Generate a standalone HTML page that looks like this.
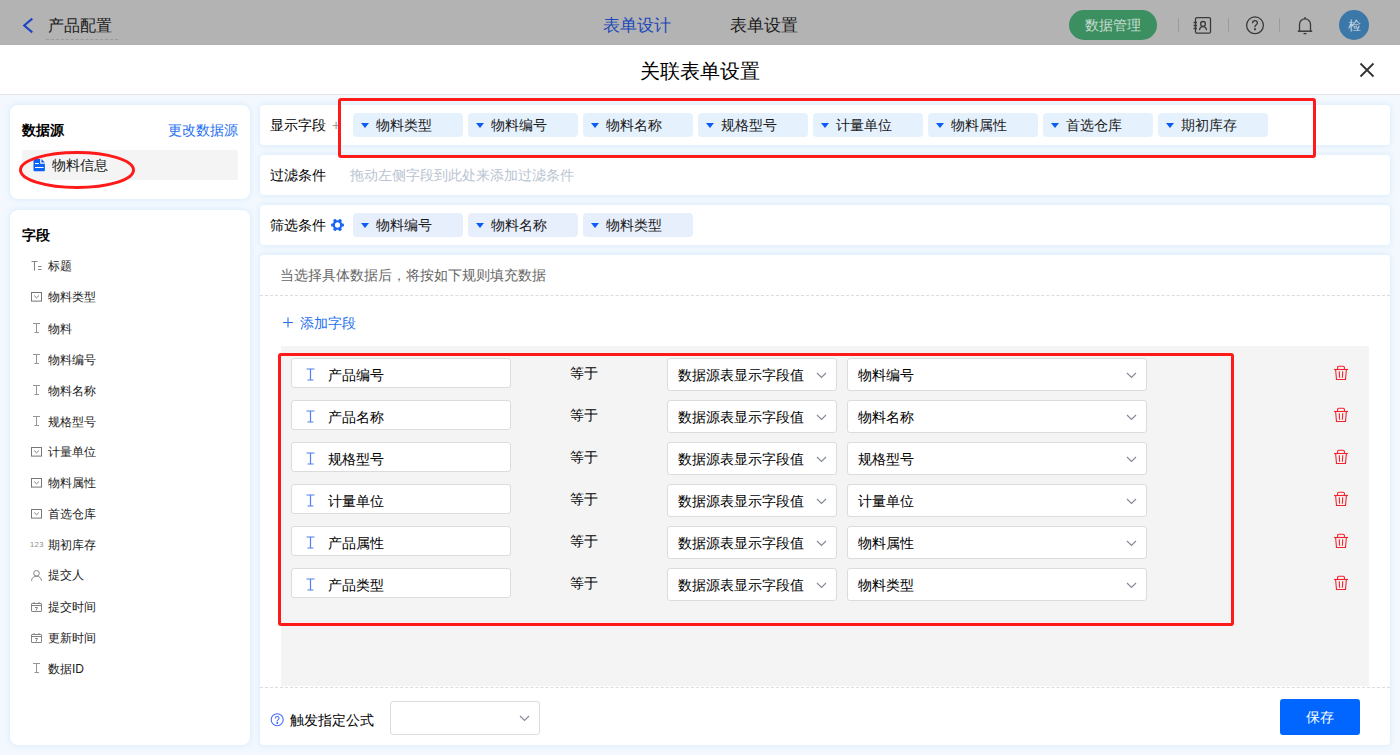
<!DOCTYPE html>
<html><head><meta charset="utf-8">
<style>
*{box-sizing:border-box;margin:0;padding:0}
html,body{width:1400px;height:755px;overflow:hidden}
body{font-family:"Liberation Sans",sans-serif;background:#f2f8fe;position:relative;color:#1f1f1f}
.abs{position:absolute}
#hdr{left:0;top:0;width:1400px;height:45px;background:#b3b3b3}
#mhead{left:0;top:45px;width:1400px;height:50px;background:#fff;border-bottom:1px solid #e6e6e6}
.card{position:absolute;background:#fff;border-radius:8px;box-shadow:0 0 6px rgba(24,120,240,0.13)}
.t{position:absolute;white-space:nowrap;line-height:1}
.chip{position:absolute;height:24px;width:110px;background:#e5f2fe;border-radius:4px;font-size:14px;color:#1a1a1a}
.chip .tri{position:absolute;left:8px;top:10px;width:0;height:0;border-left:4.5px solid transparent;border-right:4.5px solid transparent;border-top:5.5px solid #0b5cf6}
.chip span{position:absolute;left:23px;top:5px;line-height:14px}
.fitem{position:absolute;left:22px;font-size:12px;color:#1a1a1a;height:14px}
.fitem .ic{position:absolute;left:8px;top:0;width:12px;height:14px}
.fitem span{position:absolute;left:26px;top:0;line-height:14px}
.inp{position:absolute;background:#fff;border:1px solid #dcdcdc;border-radius:3px;height:31px;font-size:14px}
.redbox{position:absolute;border:3px solid #ff1a1a;border-radius:3px}
</style></head><body>
<div id="hdr" class="abs">
  <svg class="abs" style="left:20px;top:15px" width="16" height="21" viewBox="0 0 16 21"><path d="M12.3 3.6 L4.2 10.5 L12.3 17.4" fill="none" stroke="#1d45c4" stroke-width="2.1"/></svg>
  <div class="t" style="left:48px;top:18px;font-size:16px;color:#1c1c1c">产品配置</div>
  <div class="abs" style="left:46px;top:39px;width:72px;border-top:1px dashed #9a9a9a"></div>
  <div class="t" style="left:603px;top:18px;font-size:16.6px;color:#1d49b8">表单设计</div>
  <div class="t" style="left:730px;top:18px;font-size:16.6px;color:#1c1c1c">表单设置</div>
  <div class="abs" style="left:1069px;top:10px;width:88px;height:30px;border-radius:15px;background:#3b8f60"></div>
  <div class="t" style="left:1085px;top:18px;font-size:14px;color:#c8dccf">数据管理</div>
  <div class="abs" style="left:1178px;top:18px;width:1px;height:14px;background:#9c9c9c"></div>
  <div class="abs" style="left:1228px;top:18px;width:1px;height:14px;background:#9c9c9c"></div>
  <div class="abs" style="left:1279px;top:18px;width:1px;height:14px;background:#9c9c9c"></div>
  <svg class="abs" style="left:1190px;top:14px" width="24" height="24" viewBox="0 0 24 24" fill="none" stroke="#3a3a3a" stroke-width="1.3">
    <rect x="5.5" y="3.6" width="15" height="15.6" rx="1.5"/>
    <path d="M3.6 8.5h3.4M3.6 11.5h3.4M3.6 14.5h3.4"/>
    <circle cx="13" cy="9.9" r="2.4"/>
    <path d="M9.4 16.2c0.4-2.3 1.8-3.5 3.6-3.5s3.2 1.2 3.6 3.5"/>
  </svg>
  <svg class="abs" style="left:1243px;top:13px" width="24" height="24" viewBox="0 0 24 24" fill="none" stroke="#3a3a3a" stroke-width="1.3">
    <circle cx="12" cy="12.3" r="8.4"/>
    <path d="M9.6 10.2c0-1.5 1-2.5 2.4-2.5s2.4 1 2.4 2.3c0 1.6-2.4 1.9-2.4 3.6v0.6"/>
    <circle cx="12" cy="16.3" r="0.5" fill="#3a3a3a"/>
  </svg>
  <svg class="abs" style="left:1293px;top:13px" width="24" height="24" viewBox="0 0 24 24" fill="none" stroke="#3a3a3a" stroke-width="1.3">
    <path d="M12 4v2"/>
    <path d="M6.5 18V11.5c0-3.2 2.4-5.6 5.5-5.6s5.5 2.4 5.5 5.6V18"/>
    <path d="M4.8 18.2h14.4" stroke-width="1.5"/>
    <path d="M10.5 20.6h3"/>
  </svg>
  <div class="abs" style="left:1339px;top:10px;width:30px;height:30px;border-radius:50%;background:#3b77a9"></div>
  <div class="t" style="left:1347.5px;top:19px;font-size:13px;color:#c8d5df">检</div>
</div>
<div id="mhead" class="abs">
  <div class="t" style="left:640px;top:16px;font-size:20px;color:#000">关联表单设置</div>
  <svg class="abs" style="left:1359px;top:17px" width="16" height="16" viewBox="0 0 16 16"><path d="M1.5 1.5 L14.5 14.5 M14.5 1.5 L1.5 14.5" stroke="#333" stroke-width="1.8"/></svg>
</div>

<!-- left cards -->
<div class="card" style="left:10px;top:105px;width:240px;height:94px"></div>
<div class="t" style="left:22px;top:123px;font-size:14px;font-weight:bold;color:#000">数据源</div>
<div class="t" style="left:168px;top:123px;font-size:14px;color:#1e6ff0">更改数据源</div>
<div class="abs" style="left:22px;top:150px;width:216px;height:30px;background:#f4f4f4;border-radius:2px"></div>
<svg class="abs" style="left:33px;top:159px" width="12" height="13" viewBox="0 0 12 13"><path d="M0.5 1a1 1 0 0 1 1-1h5.6v4.8h4.8v6.4a1 1 0 0 1-1 1h-9.4a1 1 0 0 1-1-1z" fill="#0d62f6"/><path d="M8.4 0l3.5 3.6h-3.5z" fill="#0d62f6"/><rect x="2" y="4" width="3.8" height="1" fill="#fff"/><rect x="2" y="8" width="8.6" height="1" fill="#fff"/></svg>
<div class="t" style="left:52px;top:158px;font-size:14px;color:#1a1a1a">物料信息</div>
<div class="card" style="left:10px;top:210px;width:240px;height:535px"></div>
<div class="t" style="left:22px;top:228px;font-size:14px;font-weight:bold;color:#000">字段</div>
<svg class="abs" style="left:31px;top:261px" width="11" height="10" viewBox="0 0 11 10" fill="none" stroke="#858585" stroke-width="1"><path d="M0.5 0.5h6M3.5 0.5v9M7 5.5h3.5M7 8.5h3.5"/></svg>
<div class="t" style="left:48px;top:260px;font-size:12px;color:#1a1a1a">标题</div>
<svg class="abs" style="left:30.5px;top:292px" width="12" height="10" viewBox="0 0 12 10" fill="none" stroke="#777" stroke-width="1"><rect x="0.5" y="0.5" width="10" height="8.6"/><path d="M3.2 3.6l2.3 2.2 2.3-2.2"/></svg>
<div class="t" style="left:48px;top:291px;font-size:12px;color:#1a1a1a">物料类型</div>
<svg class="abs" style="left:32px;top:323px" width="9" height="10" viewBox="0 0 9 10" fill="none" stroke="#959595" stroke-width="1"><path d="M1 0.5h7M4.5 0.5v9M2.5 9.5h4.5"/></svg>
<div class="t" style="left:48px;top:323px;font-size:12px;color:#1a1a1a">物料</div>
<svg class="abs" style="left:32px;top:354px" width="9" height="10" viewBox="0 0 9 10" fill="none" stroke="#959595" stroke-width="1"><path d="M1 0.5h7M4.5 0.5v9M2.5 9.5h4.5"/></svg>
<div class="t" style="left:48px;top:354px;font-size:12px;color:#1a1a1a">物料编号</div>
<svg class="abs" style="left:32px;top:385px" width="9" height="10" viewBox="0 0 9 10" fill="none" stroke="#959595" stroke-width="1"><path d="M1 0.5h7M4.5 0.5v9M2.5 9.5h4.5"/></svg>
<div class="t" style="left:48px;top:385px;font-size:12px;color:#1a1a1a">物料名称</div>
<svg class="abs" style="left:32px;top:416px" width="9" height="10" viewBox="0 0 9 10" fill="none" stroke="#959595" stroke-width="1"><path d="M1 0.5h7M4.5 0.5v9M2.5 9.5h4.5"/></svg>
<div class="t" style="left:48px;top:416px;font-size:12px;color:#1a1a1a">规格型号</div>
<svg class="abs" style="left:30.5px;top:447px" width="12" height="10" viewBox="0 0 12 10" fill="none" stroke="#777" stroke-width="1"><rect x="0.5" y="0.5" width="10" height="8.6"/><path d="M3.2 3.6l2.3 2.2 2.3-2.2"/></svg>
<div class="t" style="left:48px;top:446px;font-size:12px;color:#1a1a1a">计量单位</div>
<svg class="abs" style="left:30.5px;top:478px" width="12" height="10" viewBox="0 0 12 10" fill="none" stroke="#777" stroke-width="1"><rect x="0.5" y="0.5" width="10" height="8.6"/><path d="M3.2 3.6l2.3 2.2 2.3-2.2"/></svg>
<div class="t" style="left:48px;top:477px;font-size:12px;color:#1a1a1a">物料属性</div>
<svg class="abs" style="left:30.5px;top:509px" width="12" height="10" viewBox="0 0 12 10" fill="none" stroke="#777" stroke-width="1"><rect x="0.5" y="0.5" width="10" height="8.6"/><path d="M3.2 3.6l2.3 2.2 2.3-2.2"/></svg>
<div class="t" style="left:48px;top:508px;font-size:12px;color:#1a1a1a">首选仓库</div>
<div class="t" style="left:30px;top:540.5px;font-size:7.5px;color:#8a8a8a;letter-spacing:0.4px">123</div>
<div class="t" style="left:48px;top:539px;font-size:12px;color:#1a1a1a">期初库存</div>
<svg class="abs" style="left:31px;top:570px" width="11" height="11" viewBox="0 0 11 11" fill="none" stroke="#858585" stroke-width="1"><circle cx="5.5" cy="3.3" r="2.8"/><path d="M0.5 10.8c0.3-3 2.2-4.6 5-4.6s4.7 1.6 5 4.6"/></svg>
<div class="t" style="left:48px;top:569px;font-size:12px;color:#1a1a1a">提交人</div>
<svg class="abs" style="left:31px;top:602px" width="11" height="10" viewBox="0 0 11 10" fill="none" stroke="#858585" stroke-width="1"><rect x="0.5" y="1.5" width="10" height="8" rx="0.5"/><path d="M0.5 3.5h10M3 0v2M8 0v2M4 5.5h2.5l-1.5 3"/></svg>
<div class="t" style="left:48px;top:601px;font-size:12px;color:#1a1a1a">提交时间</div>
<svg class="abs" style="left:31px;top:633px" width="11" height="10" viewBox="0 0 11 10" fill="none" stroke="#858585" stroke-width="1"><rect x="0.5" y="1.5" width="10" height="8" rx="0.5"/><path d="M0.5 3.5h10M3 0v2M8 0v2M4 5.5h2.5l-1.5 3"/></svg>
<div class="t" style="left:48px;top:632px;font-size:12px;color:#1a1a1a">更新时间</div>
<svg class="abs" style="left:32px;top:663px" width="9" height="10" viewBox="0 0 9 10" fill="none" stroke="#959595" stroke-width="1"><path d="M1 0.5h7M4.5 0.5v9M2.5 9.5h4.5"/></svg>
<div class="t" style="left:48px;top:663px;font-size:12px;color:#1a1a1a">数据ID</div>
<svg class="abs" style="left:17px;top:148px" width="122" height="44" viewBox="0 0 122 44"><ellipse cx="60" cy="22" rx="56.5" ry="17.5" fill="none" stroke="#ff1a1a" stroke-width="3"/></svg>

<!-- right cards -->
<div class="card" style="left:260px;top:105px;width:1130px;height:40px;border-radius:4px"></div>
<div class="t" style="left:270px;top:118px;font-size:14px;color:#000">显示字段</div>
<div class="t" style="left:332px;top:118px;font-size:14px;color:#999">+</div>
<div class="chip" style="left:353px;top:113px"><i class="tri"></i><span>物料类型</span></div>
<div class="chip" style="left:468px;top:113px"><i class="tri"></i><span>物料编号</span></div>
<div class="chip" style="left:583px;top:113px"><i class="tri"></i><span>物料名称</span></div>
<div class="chip" style="left:698px;top:113px"><i class="tri"></i><span>规格型号</span></div>
<div class="chip" style="left:813px;top:113px"><i class="tri"></i><span>计量单位</span></div>
<div class="chip" style="left:928px;top:113px"><i class="tri"></i><span>物料属性</span></div>
<div class="chip" style="left:1043px;top:113px"><i class="tri"></i><span>首选仓库</span></div>
<div class="chip" style="left:1158px;top:113px"><i class="tri"></i><span>期初库存</span></div>
<div class="card" style="left:260px;top:155px;width:1130px;height:40px;border-radius:4px"></div>
<div class="t" style="left:270px;top:168px;font-size:14px;color:#000">过滤条件</div>
<div class="t" style="left:350px;top:168px;font-size:14px;color:#b9c3d1">拖动左侧字段到此处来添加过滤条件</div>
<div class="card" style="left:260px;top:205px;width:1130px;height:40px;border-radius:4px"></div>
<div class="t" style="left:270px;top:218px;font-size:14px;color:#000">筛选条件</div>
<svg class="abs" style="left:330px;top:218px" width="15" height="14" viewBox="0 0 15 14"><g fill="#1a66f5" transform="translate(7.5 7)"><path fill-rule="evenodd" d="M0 -4.8a4.8 4.8 0 1 1 -0.001 0z M0 -2.5a2.5 2.5 0 1 0 0.001 0z"/><rect x="3.6" y="-1.6" width="2.8" height="3.2" rx="0.9" transform="rotate(0)"/><rect x="3.6" y="-1.6" width="2.8" height="3.2" rx="0.9" transform="rotate(60)"/><rect x="3.6" y="-1.6" width="2.8" height="3.2" rx="0.9" transform="rotate(120)"/><rect x="3.6" y="-1.6" width="2.8" height="3.2" rx="0.9" transform="rotate(180)"/><rect x="3.6" y="-1.6" width="2.8" height="3.2" rx="0.9" transform="rotate(240)"/><rect x="3.6" y="-1.6" width="2.8" height="3.2" rx="0.9" transform="rotate(300)"/></g><circle cx="7.5" cy="7" r="2.5" fill="#fff"/></svg>
<div class="chip" style="left:353px;top:213px;background:#e8effc"><i class="tri"></i><span>物料编号</span></div>
<div class="chip" style="left:468px;top:213px;background:#e8effc"><i class="tri"></i><span>物料名称</span></div>
<div class="chip" style="left:583px;top:213px;background:#e8effc"><i class="tri"></i><span>物料类型</span></div>
<div class="redbox" style="left:338px;top:98px;width:978px;height:60px"></div>
<div class="card" style="left:260px;top:255px;width:1130px;height:490px;border-radius:4px"></div>
<div class="t" style="left:280px;top:268px;font-size:14px;color:#666">当选择具体数据后，将按如下规则填充数据</div>
<div class="abs" style="left:260px;top:295px;width:1130px;border-top:1px dashed #dcdcdc"></div>
<svg class="abs" style="left:283px;top:317px" width="10" height="11" viewBox="0 0 10 11"><path d="M5 0.5v10M0 5.5h10" stroke="#2a6ff0" stroke-width="1.1"/></svg>
<div class="t" style="left:300px;top:316px;font-size:14px;color:#1e6ff0">添加字段</div>
<div class="abs" style="left:281px;top:346px;width:1088px;height:340px;background:#f4f4f4"></div>
<div class="abs" style="left:260px;top:687px;width:1130px;border-top:1px dashed #dcdcdc"></div>
<div class="inp" style="left:291px;top:358px;width:220px;height:30px"></div>
<svg class="abs" style="left:306px;top:368px" width="9" height="13" viewBox="0 0 9 13"><path d="M0.5 1h8M4.5 1v11M1.5 12h6" fill="none" stroke="#4f7ff2" stroke-width="1.2"/></svg>
<div class="t" style="left:328px;top:368px;font-size:14px;color:#000">产品编号</div>
<div class="t" style="left:570px;top:366px;font-size:14px;color:#000">等于</div>
<div class="inp" style="left:667px;top:358px;width:170px;height:33px"></div>
<div class="t" style="left:678px;top:368px;font-size:14px;color:#000">数据源表显示字段值</div>
<svg class="abs" style="left:816px;top:372px" width="11" height="7" viewBox="0 0 11 7"><path d="M1 1l4.5 4.5L10 1" fill="none" stroke="#858b96" stroke-width="1.2"/></svg>
<div class="inp" style="left:847px;top:358px;width:300px;height:33px"></div>
<div class="t" style="left:858px;top:368px;font-size:14px;color:#000">物料编号</div>
<svg class="abs" style="left:1126px;top:372px" width="11" height="7" viewBox="0 0 11 7"><path d="M1 1l4.5 4.5L10 1" fill="none" stroke="#858b96" stroke-width="1.2"/></svg>
<svg class="abs" style="left:1333px;top:365px" width="16" height="16" viewBox="0 0 16 16" fill="none" stroke="#f5222d" stroke-width="1.1"><path d="M1 4.5h14"/><path d="M4.6 4.5V2.6a1.3 1.3 0 0 1 1.3-1.3h4.2a1.3 1.3 0 0 1 1.3 1.3v1.9"/><path d="M2.6 4.5l0.9 10h9l0.9-10"/><path d="M6.3 6.3l0.3 6.5M9.7 6.3l-0.3 6.5"/></svg>
<div class="inp" style="left:291px;top:400px;width:220px;height:30px"></div>
<svg class="abs" style="left:306px;top:410px" width="9" height="13" viewBox="0 0 9 13"><path d="M0.5 1h8M4.5 1v11M1.5 12h6" fill="none" stroke="#4f7ff2" stroke-width="1.2"/></svg>
<div class="t" style="left:328px;top:410px;font-size:14px;color:#000">产品名称</div>
<div class="t" style="left:570px;top:408px;font-size:14px;color:#000">等于</div>
<div class="inp" style="left:667px;top:400px;width:170px;height:33px"></div>
<div class="t" style="left:678px;top:410px;font-size:14px;color:#000">数据源表显示字段值</div>
<svg class="abs" style="left:816px;top:414px" width="11" height="7" viewBox="0 0 11 7"><path d="M1 1l4.5 4.5L10 1" fill="none" stroke="#858b96" stroke-width="1.2"/></svg>
<div class="inp" style="left:847px;top:400px;width:300px;height:33px"></div>
<div class="t" style="left:858px;top:410px;font-size:14px;color:#000">物料名称</div>
<svg class="abs" style="left:1126px;top:414px" width="11" height="7" viewBox="0 0 11 7"><path d="M1 1l4.5 4.5L10 1" fill="none" stroke="#858b96" stroke-width="1.2"/></svg>
<svg class="abs" style="left:1333px;top:407px" width="16" height="16" viewBox="0 0 16 16" fill="none" stroke="#f5222d" stroke-width="1.1"><path d="M1 4.5h14"/><path d="M4.6 4.5V2.6a1.3 1.3 0 0 1 1.3-1.3h4.2a1.3 1.3 0 0 1 1.3 1.3v1.9"/><path d="M2.6 4.5l0.9 10h9l0.9-10"/><path d="M6.3 6.3l0.3 6.5M9.7 6.3l-0.3 6.5"/></svg>
<div class="inp" style="left:291px;top:442px;width:220px;height:30px"></div>
<svg class="abs" style="left:306px;top:452px" width="9" height="13" viewBox="0 0 9 13"><path d="M0.5 1h8M4.5 1v11M1.5 12h6" fill="none" stroke="#4f7ff2" stroke-width="1.2"/></svg>
<div class="t" style="left:328px;top:452px;font-size:14px;color:#000">规格型号</div>
<div class="t" style="left:570px;top:450px;font-size:14px;color:#000">等于</div>
<div class="inp" style="left:667px;top:442px;width:170px;height:33px"></div>
<div class="t" style="left:678px;top:452px;font-size:14px;color:#000">数据源表显示字段值</div>
<svg class="abs" style="left:816px;top:456px" width="11" height="7" viewBox="0 0 11 7"><path d="M1 1l4.5 4.5L10 1" fill="none" stroke="#858b96" stroke-width="1.2"/></svg>
<div class="inp" style="left:847px;top:442px;width:300px;height:33px"></div>
<div class="t" style="left:858px;top:452px;font-size:14px;color:#000">规格型号</div>
<svg class="abs" style="left:1126px;top:456px" width="11" height="7" viewBox="0 0 11 7"><path d="M1 1l4.5 4.5L10 1" fill="none" stroke="#858b96" stroke-width="1.2"/></svg>
<svg class="abs" style="left:1333px;top:449px" width="16" height="16" viewBox="0 0 16 16" fill="none" stroke="#f5222d" stroke-width="1.1"><path d="M1 4.5h14"/><path d="M4.6 4.5V2.6a1.3 1.3 0 0 1 1.3-1.3h4.2a1.3 1.3 0 0 1 1.3 1.3v1.9"/><path d="M2.6 4.5l0.9 10h9l0.9-10"/><path d="M6.3 6.3l0.3 6.5M9.7 6.3l-0.3 6.5"/></svg>
<div class="inp" style="left:291px;top:484px;width:220px;height:30px"></div>
<svg class="abs" style="left:306px;top:494px" width="9" height="13" viewBox="0 0 9 13"><path d="M0.5 1h8M4.5 1v11M1.5 12h6" fill="none" stroke="#4f7ff2" stroke-width="1.2"/></svg>
<div class="t" style="left:328px;top:494px;font-size:14px;color:#000">计量单位</div>
<div class="t" style="left:570px;top:492px;font-size:14px;color:#000">等于</div>
<div class="inp" style="left:667px;top:484px;width:170px;height:33px"></div>
<div class="t" style="left:678px;top:494px;font-size:14px;color:#000">数据源表显示字段值</div>
<svg class="abs" style="left:816px;top:498px" width="11" height="7" viewBox="0 0 11 7"><path d="M1 1l4.5 4.5L10 1" fill="none" stroke="#858b96" stroke-width="1.2"/></svg>
<div class="inp" style="left:847px;top:484px;width:300px;height:33px"></div>
<div class="t" style="left:858px;top:494px;font-size:14px;color:#000">计量单位</div>
<svg class="abs" style="left:1126px;top:498px" width="11" height="7" viewBox="0 0 11 7"><path d="M1 1l4.5 4.5L10 1" fill="none" stroke="#858b96" stroke-width="1.2"/></svg>
<svg class="abs" style="left:1333px;top:491px" width="16" height="16" viewBox="0 0 16 16" fill="none" stroke="#f5222d" stroke-width="1.1"><path d="M1 4.5h14"/><path d="M4.6 4.5V2.6a1.3 1.3 0 0 1 1.3-1.3h4.2a1.3 1.3 0 0 1 1.3 1.3v1.9"/><path d="M2.6 4.5l0.9 10h9l0.9-10"/><path d="M6.3 6.3l0.3 6.5M9.7 6.3l-0.3 6.5"/></svg>
<div class="inp" style="left:291px;top:526px;width:220px;height:30px"></div>
<svg class="abs" style="left:306px;top:536px" width="9" height="13" viewBox="0 0 9 13"><path d="M0.5 1h8M4.5 1v11M1.5 12h6" fill="none" stroke="#4f7ff2" stroke-width="1.2"/></svg>
<div class="t" style="left:328px;top:536px;font-size:14px;color:#000">产品属性</div>
<div class="t" style="left:570px;top:534px;font-size:14px;color:#000">等于</div>
<div class="inp" style="left:667px;top:526px;width:170px;height:33px"></div>
<div class="t" style="left:678px;top:536px;font-size:14px;color:#000">数据源表显示字段值</div>
<svg class="abs" style="left:816px;top:540px" width="11" height="7" viewBox="0 0 11 7"><path d="M1 1l4.5 4.5L10 1" fill="none" stroke="#858b96" stroke-width="1.2"/></svg>
<div class="inp" style="left:847px;top:526px;width:300px;height:33px"></div>
<div class="t" style="left:858px;top:536px;font-size:14px;color:#000">物料属性</div>
<svg class="abs" style="left:1126px;top:540px" width="11" height="7" viewBox="0 0 11 7"><path d="M1 1l4.5 4.5L10 1" fill="none" stroke="#858b96" stroke-width="1.2"/></svg>
<svg class="abs" style="left:1333px;top:533px" width="16" height="16" viewBox="0 0 16 16" fill="none" stroke="#f5222d" stroke-width="1.1"><path d="M1 4.5h14"/><path d="M4.6 4.5V2.6a1.3 1.3 0 0 1 1.3-1.3h4.2a1.3 1.3 0 0 1 1.3 1.3v1.9"/><path d="M2.6 4.5l0.9 10h9l0.9-10"/><path d="M6.3 6.3l0.3 6.5M9.7 6.3l-0.3 6.5"/></svg>
<div class="inp" style="left:291px;top:568px;width:220px;height:30px"></div>
<svg class="abs" style="left:306px;top:578px" width="9" height="13" viewBox="0 0 9 13"><path d="M0.5 1h8M4.5 1v11M1.5 12h6" fill="none" stroke="#4f7ff2" stroke-width="1.2"/></svg>
<div class="t" style="left:328px;top:578px;font-size:14px;color:#000">产品类型</div>
<div class="t" style="left:570px;top:576px;font-size:14px;color:#000">等于</div>
<div class="inp" style="left:667px;top:568px;width:170px;height:33px"></div>
<div class="t" style="left:678px;top:578px;font-size:14px;color:#000">数据源表显示字段值</div>
<svg class="abs" style="left:816px;top:582px" width="11" height="7" viewBox="0 0 11 7"><path d="M1 1l4.5 4.5L10 1" fill="none" stroke="#858b96" stroke-width="1.2"/></svg>
<div class="inp" style="left:847px;top:568px;width:300px;height:33px"></div>
<div class="t" style="left:858px;top:578px;font-size:14px;color:#000">物料类型</div>
<svg class="abs" style="left:1126px;top:582px" width="11" height="7" viewBox="0 0 11 7"><path d="M1 1l4.5 4.5L10 1" fill="none" stroke="#858b96" stroke-width="1.2"/></svg>
<svg class="abs" style="left:1333px;top:575px" width="16" height="16" viewBox="0 0 16 16" fill="none" stroke="#f5222d" stroke-width="1.1"><path d="M1 4.5h14"/><path d="M4.6 4.5V2.6a1.3 1.3 0 0 1 1.3-1.3h4.2a1.3 1.3 0 0 1 1.3 1.3v1.9"/><path d="M2.6 4.5l0.9 10h9l0.9-10"/><path d="M6.3 6.3l0.3 6.5M9.7 6.3l-0.3 6.5"/></svg>
<div class="redbox" style="left:278px;top:353px;width:956px;height:273px"></div>
<svg class="abs" style="left:270px;top:713px" width="14" height="14" viewBox="0 0 14 14" fill="none" stroke="#4a6cf7" stroke-width="1.1"><circle cx="7.2" cy="6.7" r="6"/><path d="M5.3 5.4c0-1.1 0.8-1.9 1.9-1.9s1.9 0.8 1.9 1.8c0 1.2-1.9 1.4-1.9 2.7v0.4"/><circle cx="7.2" cy="10" r="0.45" fill="#4a6cf7"/></svg>
<div class="t" style="left:290px;top:713px;font-size:14px;color:#000">触发指定公式</div>
<div class="inp" style="left:390px;top:701px;width:150px;height:34px"></div>
<svg class="abs" style="left:519px;top:715px" width="11" height="7" viewBox="0 0 11 7"><path d="M1 1l4.5 4.5L10 1" fill="none" stroke="#858b96" stroke-width="1.2"/></svg>
<div class="abs" style="left:1280px;top:699px;width:80px;height:36px;background:#0066ff;border-radius:3px"></div>
<div class="t" style="left:1306px;top:710px;font-size:14px;color:#fff">保存</div>

</body></html>
